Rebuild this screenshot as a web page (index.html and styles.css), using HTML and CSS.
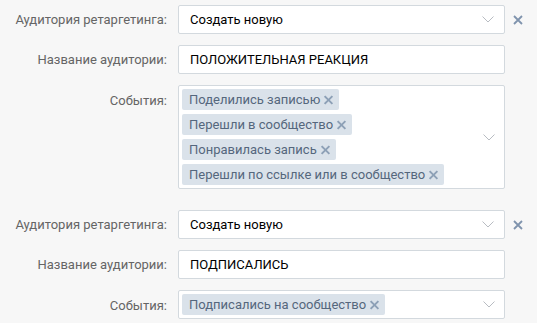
FILE: index.html
```html
<!DOCTYPE html>
<html lang="ru">
<head>
    <meta charset="UTF-8">
    <title>Аудитории ретаргетинга</title>
    <link rel="stylesheet" href="styles.css">
</head>
<body>
    <div class="form">
        <div class="group">
            <div class="row">
                <div class="label">Аудитория ретаргетинга:</div>
                <div class="field select">
                    <span class="value">Создать новую</span>
                    <svg class="chevron" width="12" height="7" viewBox="0 0 12 7"><path d="M0.5 0.5 L6 6 L11.5 0.5" fill="none" stroke="#b8bcc2" stroke-width="1"/></svg>
                </div>
                <svg class="remove" width="10" height="10" viewBox="0 0 10 10"><path d="M1 1 L9 9 M9 1 L1 9" stroke="#7f93ad" stroke-width="1.8"/></svg>
            </div>
            <div class="row">
                <div class="label">Название аудитории:</div>
                <div class="field">
                    <span class="value">ПОЛОЖИТЕЛЬНАЯ РЕАКЦИЯ</span>
                </div>
            </div>
            <div class="row row-top">
                <div class="label">События:</div>
                <div class="field tags">
                    <div class="tag-list">
                        <span class="tag">Поделились записью <i class="tag-x"></i></span>
                        <span class="tag">Перешли в сообщество <i class="tag-x"></i></span>
                        <span class="tag">Понравилась запись <i class="tag-x"></i></span>
                        <span class="tag">Перешли по ссылке или в сообщество <i class="tag-x"></i></span>
                    </div>
                    <svg class="chevron" width="12" height="7" viewBox="0 0 12 7"><path d="M0.5 0.5 L6 6 L11.5 0.5" fill="none" stroke="#b8bcc2" stroke-width="1"/></svg>
                </div>
            </div>
        </div>

        <div class="group">
            <div class="row">
                <div class="label">Аудитория ретаргетинга:</div>
                <div class="field select">
                    <span class="value">Создать новую</span>
                    <svg class="chevron" width="12" height="7" viewBox="0 0 12 7"><path d="M0.5 0.5 L6 6 L11.5 0.5" fill="none" stroke="#b8bcc2" stroke-width="1"/></svg>
                </div>
                <svg class="remove" width="10" height="10" viewBox="0 0 10 10"><path d="M1 1 L9 9 M9 1 L1 9" stroke="#7f93ad" stroke-width="1.8"/></svg>
            </div>
            <div class="row">
                <div class="label">Название аудитории:</div>
                <div class="field">
                    <span class="value">ПОДПИСАЛИСЬ</span>
                </div>
            </div>
            <div class="row row-top">
                <div class="label">События:</div>
                <div class="field tags">
                    <div class="tag-list">
                        <span class="tag">Подписались на сообщество <i class="tag-x"></i></span>
                    </div>
                    <svg class="chevron" width="12" height="7" viewBox="0 0 12 7"><path d="M0.5 0.5 L6 6 L11.5 0.5" fill="none" stroke="#b8bcc2" stroke-width="1"/></svg>
                </div>
            </div>
        </div>
    </div>
</body>
</html>
```

FILE: styles.css
```css
body {
    margin: 0;
    background: #f7f7f7;
    font-family: Roboto, "Liberation Sans", Arial, sans-serif;
    font-size: 13px;
    color: #000;
}
.form {
    padding: 5px 0 0 0;
    display: flex;
    flex-direction: column;
    gap: 21px;
}
.group {
    display: flex;
    flex-direction: column;
    gap: 11px;
}
.row {
    display: grid;
    grid-template-columns: 167px 327px 22px;
    column-gap: 11px;
    align-items: center;
}
.row-top {
    align-items: start;
}
.label {
    text-align: right;
    color: #656565;
}
.row-top .label {
    padding-top: 8px;
}
.field {
    box-sizing: border-box;
    height: 29px;
    background: #fff;
    border: 1px solid #d3d9de;
    border-radius: 2px;
    display: flex;
    align-items: center;
    padding: 0 10px 0 11px;
}
.chevron {
    margin-left: auto;
}
.remove {
    justify-self: start;
    margin-left: -3px;
}
.tags {
    height: auto;
    padding: 3px 9px 3px 3px;
}
.tag-list {
    display: flex;
    flex-direction: column;
    align-items: flex-start;
    gap: 4px;
}
.tag {
    display: inline-flex;
    align-items: center;
    height: 21px;
    padding: 0 6px 0 7px;
    background: #dae2ea;
    border-radius: 2px;
    color: #55677d;
    white-space: nowrap;
}
.tag-x {
    display: inline-block;
    position: relative;
    width: 9px;
    height: 9px;
    margin-left: 4px;
}
.tag-x::before,
.tag-x::after {
    content: "";
    position: absolute;
    top: 3.5px;
    left: -1px;
    width: 11px;
    height: 2px;
    background: #8da0b6;
    transform: rotate(45deg);
}
.tag-x::after {
    transform: rotate(-45deg);
}
```
